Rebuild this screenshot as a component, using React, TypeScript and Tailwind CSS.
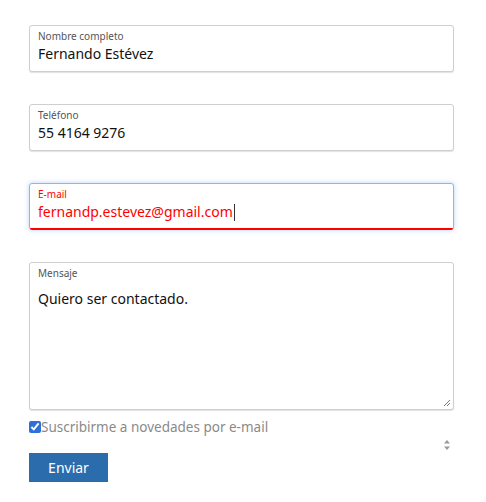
import { useState } from "react";

const font = { fontFamily: '"Noto Sans", "Open Sans", sans-serif' };

function Field({
  label,
  value,
  focused = false,
}: {
  label: string;
  value: string;
  focused?: boolean;
}) {
  return (
    <div
      className={`relative h-[47px] rounded-[3px] border bg-white px-[8px] pt-[3px] ${
        focused
          ? "border-[#8ab8ec] shadow-[0_0_5px_rgba(100,160,230,0.45)]"
          : "border-[#cfcfcf] shadow-[0_1px_1px_rgba(0,0,0,0.12)]"
      }`}
    >
      <div
        className={`text-[10px] leading-[14px] ${focused ? "text-[#ff0000]" : "text-[#555]"}`}
      >
        {label}
      </div>
      <div
        className={`mt-[1px] flex items-center text-[14px] leading-[20px] ${focused ? "text-[#ff0000]" : "text-[#111]"}`}
      >
        {value}
        {focused && <span className="ml-[1px] inline-block h-[17px] w-[1px] bg-[#333]" />}
      </div>
      {focused && (
        <div className="absolute inset-x-0 bottom-[-1px] h-[2px] rounded-b-[3px] bg-[#ff0000]" />
      )}
    </div>
  );
}

export default function App() {
  const [checked, setChecked] = useState(true);

  return (
    <div className="h-[502px] w-[486px] bg-white" style={font}>
      <div className="flex w-[454px] flex-col pl-[29px] pt-[25px]">
        <Field label="Nombre completo" value="Fernando Estévez" />
        <div className="mt-[32px]">
          <Field label="Teléfono" value="55 4164 9276" />
        </div>
        <div className="mt-[32px]">
          <Field label="E-mail" value="fernandp.estevez@gmail.com" focused />
        </div>

        <div className="relative mt-[32px] h-[148px] rounded-[3px] border border-[#cfcfcf] bg-white px-[8px] pt-[3px] shadow-[0_1px_1px_rgba(0,0,0,0.12)]">
          <div className="text-[10px] leading-[14px] text-[#555]">Mensaje</div>
          <div className="mt-[9px] text-[14px] leading-[20px] text-[#111]">
            Quiero ser contactado.
          </div>
          <svg
            className="absolute bottom-[2px] right-[2px]"
            width="8"
            height="8"
            viewBox="0 0 8 8"
          >
            <path d="M7 1L1 7M7 4L4 7" stroke="#777" strokeWidth="1" />
          </svg>
        </div>

        <label className="mt-[8px] flex items-center text-[13.5px] leading-[18px] text-[#8a8a8a]">
          <input
            type="checkbox"
            checked={checked}
            onChange={() => setChecked(!checked)}
            className="m-0 h-[12px] w-[12px] accent-[#2f6fd6]"
          />
          <span className="ml-[0px]">Suscribirme a novedades por e-mail</span>
        </label>

        <div className="flex justify-end pr-[3px]">
          <svg width="8" height="12" viewBox="0 0 8 12" className="mt-[3px]">
            <path d="M4 1L7 4.5H1Z" fill="#9a9a9a" />
            <path d="M4 11L7 7.5H1Z" fill="#9a9a9a" />
          </svg>
        </div>

        <div>
          <button className="mt-[2px] h-[29px] w-[79px] bg-[#2b6cad] text-[14px] text-white">
            Enviar
          </button>
        </div>
      </div>
    </div>
  );
}
